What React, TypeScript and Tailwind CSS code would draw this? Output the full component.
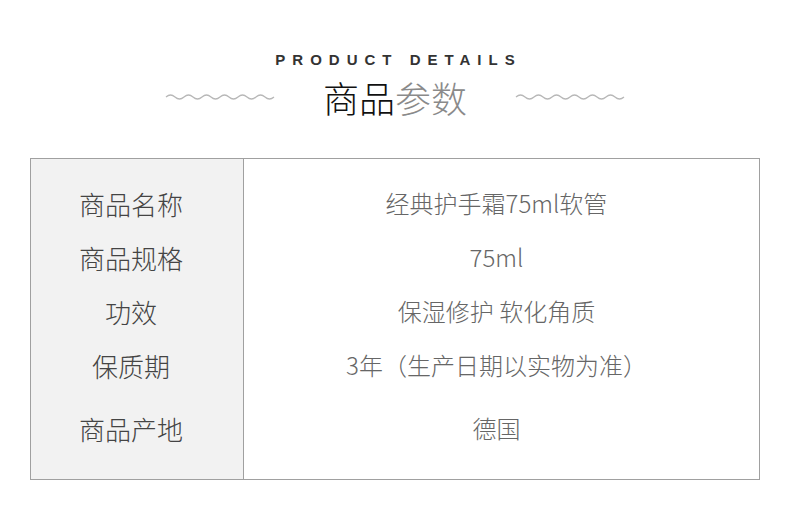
import React from "react";

const rows = [
  { label: "商品名称", value: "经典护手霜75ml软管", h: "h-[54px]" },
  { label: "商品规格", value: "75ml", h: "h-[54px]" },
  { label: "功效", value: "保湿修护 软化角质", h: "h-[54px]" },
  { label: "保质期", value: "3年（生产日期以实物为准）", h: "h-[54px]" },
  { label: "商品产地", value: "德国", h: "h-[72px]" },
];

const Wave = () => (
  <svg width="110" height="10" viewBox="0 0 110 10" fill="none">
    <path
      d="M1 5 Q5.5 1 10 5 T19 5 T28 5 T37 5 T46 5 T55 5 T64 5 T73 5 T82 5 T91 5 T100 5 T109 5"
      stroke="#b8b8b8"
      strokeWidth="1.2"
    />
  </svg>
);

export default function App() {
  const font = { fontFamily: '"Noto Sans CJK SC", "Liberation Sans", sans-serif' };
  return (
    <div className="w-[790px] h-[528px] bg-white" style={font}>
      <div className="flex flex-col items-center pt-[48px]">
        <div className="text-[15px] font-bold tracking-[7px] text-[#333] leading-[24px] pl-[7px] font-['Liberation_Sans',sans-serif]">
          PRODUCT DETAILS
        </div>
        <div className="flex items-center gap-[48px] mt-[2px]">
          <Wave />
          <div className="text-[36px] leading-[46px] font-light">
            <span className="text-[#111]">商品</span>
            <span className="text-[#8a8a8a]">参数</span>
          </div>
          <Wave />
        </div>
      </div>
      <div className="mx-[30px] mt-[38px] w-[730px] border border-[#a0a0a0] flex">
        <div className="w-[213px] bg-[#f2f2f2] border-r border-[#a0a0a0] pt-[17px] pb-[15px] pr-[12px] flex flex-col">
          {rows.map((r) => (
            <div key={r.label} className={`${r.h} flex items-center justify-center text-[26px] font-light text-[#444]`}>
              {r.label}
            </div>
          ))}
        </div>
        <div className="flex-1 pt-[17px] pb-[15px] pr-[10px] flex flex-col">
          {rows.map((r) => (
            <div key={r.label} className={`${r.h} flex items-center justify-center text-[24px] font-light text-[#666]`}>
              {r.value}
            </div>
          ))}
        </div>
      </div>
    </div>
  );
}
